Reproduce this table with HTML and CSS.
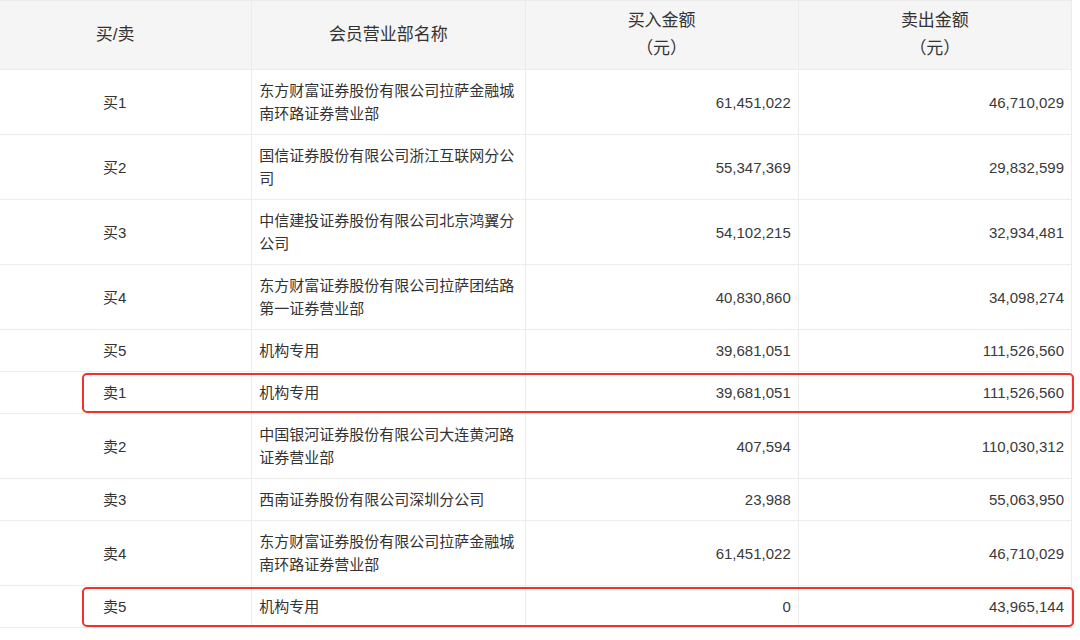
FILE: index.html
```html
<!DOCTYPE html>
<html lang="zh-CN">
<head>
<meta charset="utf-8">
<title>龙虎榜</title>
<link rel="stylesheet" href="styles.css">
</head>
<body>
<table class="board">
  <colgroup>
    <col class="c"><col class="c"><col class="c"><col class="c">
  </colgroup>
  <thead>
    <tr>
      <th>买/卖</th>
      <th>会员营业部名称</th>
      <th>买入金额<br>（元）</th>
      <th>卖出金额<br>（元）</th>
    </tr>
  </thead>
  <tbody>
    <tr><td class="side">买1</td><td class="name">东方财富证券股份有限公司拉萨金融城南环路证券营业部</td><td class="num">61,451,022</td><td class="num">46,710,029</td></tr>
    <tr><td class="side">买2</td><td class="name">国信证券股份有限公司浙江互联网分公司</td><td class="num">55,347,369</td><td class="num">29,832,599</td></tr>
    <tr><td class="side">买3</td><td class="name">中信建投证券股份有限公司北京鸿翼分公司</td><td class="num">54,102,215</td><td class="num">32,934,481</td></tr>
    <tr><td class="side">买4</td><td class="name">东方财富证券股份有限公司拉萨团结路第一证券营业部</td><td class="num">40,830,860</td><td class="num">34,098,274</td></tr>
    <tr><td class="side">买5</td><td class="name">机构专用</td><td class="num">39,681,051</td><td class="num">111,526,560</td></tr>
    <tr class="marked"><td class="side">卖1</td><td class="name">机构专用</td><td class="num">39,681,051</td><td class="num">111,526,560</td></tr>
    <tr><td class="side">卖2</td><td class="name">中国银河证券股份有限公司大连黄河路证券营业部</td><td class="num">407,594</td><td class="num">110,030,312</td></tr>
    <tr><td class="side">卖3</td><td class="name">西南证券股份有限公司深圳分公司</td><td class="num">23,988</td><td class="num">55,063,950</td></tr>
    <tr><td class="side">卖4</td><td class="name">东方财富证券股份有限公司拉萨金融城南环路证券营业部</td><td class="num">61,451,022</td><td class="num">46,710,029</td></tr>
    <tr class="marked"><td class="side">卖5</td><td class="name">机构专用</td><td class="num">0</td><td class="num">43,965,144</td></tr>
  </tbody>
</table>
</body>
</html>
```

FILE: styles.css
```css
html, body {
  margin: 0;
  padding: 0;
  background: #ffffff;
  overflow: hidden;
}

body {
  font-family: "Liberation Sans", "Noto Sans CJK SC", sans-serif;
  color: #333333;
}

.board {
  margin-left: -22px;
  width: 1094px;
  table-layout: fixed;
  border-collapse: collapse;
}

.board th,
.board td {
  border: 1px solid #ececec;
}

.board th {
  background: #f5f5f5;
  font-weight: normal;
  font-size: 17px;
  line-height: 28px;
  padding: 6px 8px;
  text-align: center;
  color: #333333;
}

.board td {
  font-size: 15px;
  line-height: 23px;
  padding: 9px 8px 9px 7px;
  vertical-align: middle;
}

.board .side {
  text-align: center;
}

.board .name {
  text-align: left;
  padding-right: 4px;
}

.board .num {
  text-align: right;
  padding-right: 7px;
  color: #3a3a3a;
}

.marked td:first-child {
  position: relative;
}

.marked td:first-child::after {
  content: "";
  position: absolute;
  left: 103px;
  top: 1px;
  bottom: 0;
  width: 988px;
  border: 2px solid #f2312b;
  border-radius: 5px;
  pointer-events: none;
}
```
